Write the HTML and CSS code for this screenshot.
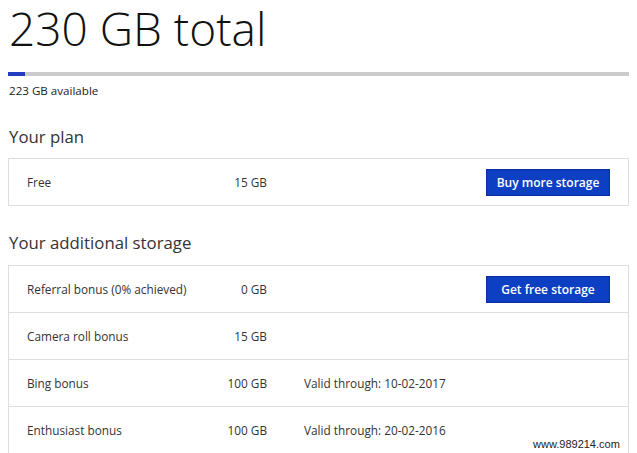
FILE: index.html
```html
<!DOCTYPE html>
<html lang="en">
<head>
<meta charset="utf-8">
<title>Storage</title>
<link rel="stylesheet" href="styles.css">
</head>
<body>
<div class="page">
  <h1 class="total">230 GB total</h1>
  <div class="meter"><div class="meter-fill" style="width: 2.8%"></div></div>
  <p class="available">223 GB available</p>

  <h2 class="section-title">Your plan</h2>
  <div class="card">
    <div class="row">
      <span class="label">Free</span>
      <span class="size">15 GB</span>
      <span class="valid"></span>
      <button class="btn">Buy more storage</button>
    </div>
  </div>

  <h2 class="section-title section-title--second">Your additional storage</h2>
  <div class="card">
    <div class="row">
      <span class="label">Referral bonus (0% achieved)</span>
      <span class="size">0 GB</span>
      <span class="valid"></span>
      <button class="btn">Get free storage</button>
    </div>
    <div class="row">
      <span class="label">Camera roll bonus</span>
      <span class="size">15 GB</span>
      <span class="valid"></span>
      <span class="action"></span>
    </div>
    <div class="row">
      <span class="label">Bing bonus</span>
      <span class="size">100 GB</span>
      <span class="valid">Valid through: 10-02-2017</span>
      <span class="action"></span>
    </div>
    <div class="row">
      <span class="label">Enthusiast bonus</span>
      <span class="size">100 GB</span>
      <span class="valid">Valid through: 20-02-2016</span>
      <span class="action"></span>
    </div>
  </div>
  <div class="watermark">www.989214.com</div>
</div>
</body>
</html>
```
FILE: styles.css
```css
html, body {
  margin: 0;
  padding: 0;
  background: #ffffff;
}
body {
  font-family: "Open Sans", "Noto Sans", "Liberation Sans", sans-serif;
  color: #333333;
  height: 453px;
  overflow: hidden;
}
.page {
  position: relative;
  width: 621px;
  margin-left: 8px;
  height: 453px;
}
.total {
  margin: 0;
  font-size: 46px;
  font-weight: 300;
  line-height: 56px;
  color: #111111;
  padding-left: 1px;
}
.meter {
  margin-top: 16px;
  height: 4px;
  background: #cbcbcb;
}
.meter-fill {
  height: 100%;
  background: #1f3fbf;
}
.available {
  margin: 7px 0 0 1px;
  font-size: 11.6px;
  line-height: 16px;
  color: #222222;
}
.section-title {
  margin: 26px 0 0 1px;
  font-size: 16.8px;
  font-weight: 400;
  line-height: 24px;
  color: #333333;
}
.section-title--second {
  margin-top: 25px;
}
.card {
  margin-top: 9px;
  border: 1px solid #dedede;
}
.section-title--second + .card {
  margin-top: 10px;
}
.row {
  display: grid;
  grid-template-columns: 200px 40px 1fr 124px;
  align-items: center;
  height: 46px;
  padding: 0 18px;
  font-size: 11.8px;
  color: #333333;
}
.row + .row {
  border-top: 1px solid #dedede;
}
.size {
  text-align: right;
  white-space: nowrap;
}
.valid {
  padding-left: 37px;
}
.btn {
  height: 27px;
  border: 1px solid #0a2e9e;
  background: #0c3fc2;
  color: #ffffff;
  font-family: inherit;
  font-size: 12px;
  font-weight: 600;
  padding: 0;
  cursor: pointer;
}
.watermark {
  position: absolute;
  left: 523px;
  top: 438px;
  font-family: "Liberation Sans", sans-serif;
  font-size: 11px;
  color: #222222;
  background: rgba(255, 255, 255, 0.8);
  padding: 0 2px;
}
```
